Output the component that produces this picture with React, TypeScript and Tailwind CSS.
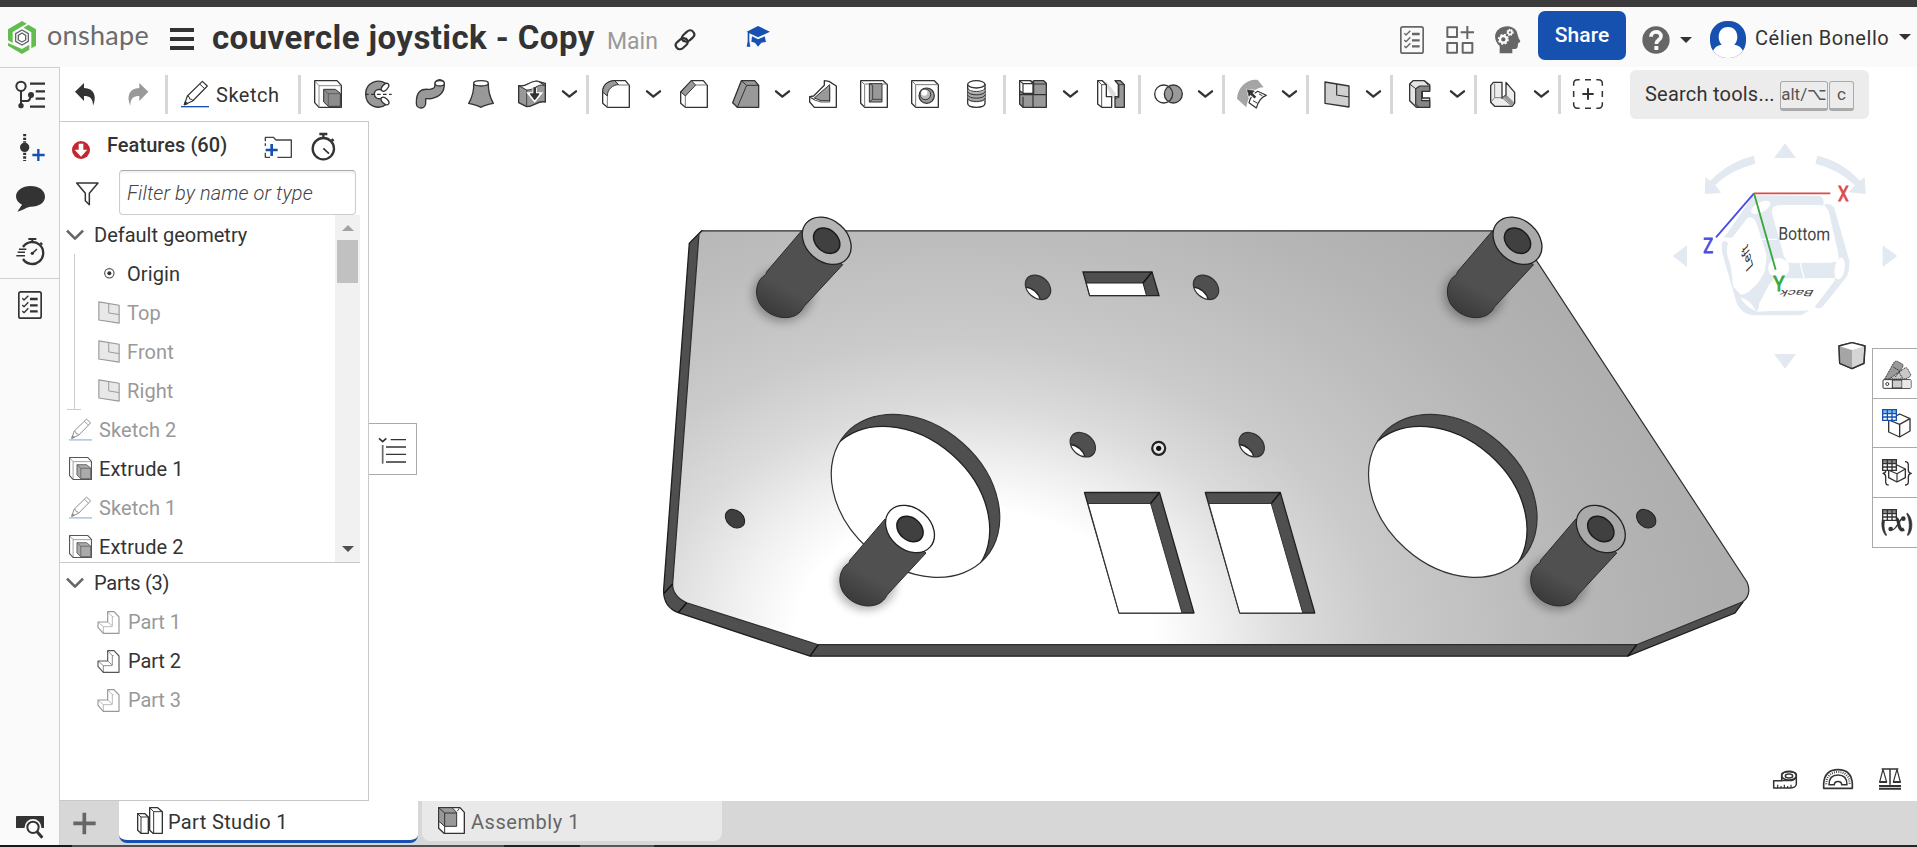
import React from "react";

const INK = "#333";
const MID = "#999";

type IconProps = { w?: number; h?: number; vb?: string; children: React.ReactNode; className?: string };

/* Icons are drawn on a grid of three units per pixel. */
function Icon({ w = 28, h = 28, vb, children, className = "" }: IconProps) {
  return (
    <svg
      width={w}
      height={h}
      viewBox={vb ?? `0 0 ${w * 3} ${h * 3}`}
      fill="none"
      stroke={INK}
      strokeWidth={4}
      strokeLinejoin="round"
      className={"block shrink-0 overflow-visible " + className}
    >
      {children}
    </svg>
  );
}

const ExtrudeIcon = ({ size = 28, soft = false }: { size?: number; soft?: boolean }) => (
  <Icon w={size} h={size} vb="0 0 84 84">
    <g stroke={soft ? "#555" : INK}>
      <path d="M2 2H69L82 16V82H15L2 68Z" fill="#fff" />
      <path d="M15 82V17H82M2 2L15 17" strokeWidth={2.5} stroke="#777" />
      <path d="M29 28H64L79 40V79H43L29 66Z" fill={soft ? "#aaa" : "#8d8d8d"} strokeWidth={3} />
      <path d="M43 79V41H79M29 28L43 41" strokeWidth={2.5} stroke="#555" />
    </g>
  </Icon>
);

const PencilIcon = ({ size = 28, soft = false }: { size?: number; soft?: boolean }) => (
  <Icon w={size} h={size} vb="0 0 84 84">
    <g stroke={soft ? "#888" : INK} strokeWidth={3.5}>
      <path d="M10 74L19 48L64 4L79 18L35 63Z" fill="#fff" />
      <path d="M19 48L24 50L26 57L33 58L35 63M56 12L71 26" strokeWidth={3} />
      <path d="M10 74L13 65L19 71Z" fill={soft ? "#888" : INK} />
    </g>
    <path d="M0 80H84" stroke={soft ? "#8fa9dd" : "#1651b0"} strokeWidth={4} />
  </Icon>
);

const PlaneIcon = ({ soft = false }: { soft?: boolean }) => (
  <Icon w={soft ? 22 : 26} h={soft ? 23 : 27} vb="0 0 78 81">
    <g stroke={soft ? "#999" : INK} strokeWidth={4}>
      <path d="M3 3L75 15V78L3 67Z" fill={soft ? "#e8e8e8" : "#d0d0d0"} />
      <path d="M38 9V42L75 48" strokeWidth={3.5} />
    </g>
  </Icon>
);

const PartIcon = ({ soft = false }: { soft?: boolean }) => (
  <Icon w={23} h={23} vb="0 0 69 69">
    <g stroke={soft ? "#999" : "#555"} strokeWidth={3.5}>
      <path d="M32 2H51L66 18V67H19L3 49V33H32Z" fill="#fff" />
      <path d="M32 2L46 17V45L32 33M3 33L19 47H46M19 47V67M46 17H50" strokeWidth={2} />
    </g>
  </Icon>
);

const Chevron = ({ className = "" }: { className?: string }) => (
  <Icon w={15} h={9} className={className}>
    <path d="M3 4L22 20L42 4" strokeWidth={7} strokeLinecap="round" />
  </Icon>
);

const Separator = ({ className = "" }: { className?: string }) => (
  <div className={"h-[39px] w-[3px] shrink-0 bg-[#d7d7d7] " + className} />
);

const ChecklistIcon = ({ color }: { color: string }) => (
  <Icon w={24} h={28}>
    <g stroke={color}>
      <rect x="2.5" y="2.5" width="67" height="79" rx="6" strokeWidth={5} />
      <path d="M13 22L18 27L31 14M13 42L18 47L31 34M13 60L18 65L31 52" strokeWidth={4} />
      <path d="M36 24H59M36 43H59M36 61H59" strokeWidth={7} />
    </g>
  </Icon>
);

function Header() {
  return (
    <header className="flex h-[60px] shrink-0 items-center bg-[#fafafa]">
      <Icon w={28} h={33} className="ml-[8px]">
        <g stroke="none" fill="#63bd4e">
          <path d="M0 25L42 0L56 8L14 33V66L0 58Z" />
          <path d="M61 11L84 25V74L70 82V34L47 20Z" />
          <path d="M0 66L42 84L64 71V86L42 99L0 74Z" />
        </g>
        <path d="M42 27L61 38V61L42 72L23 61V38Z" fill="#fff" stroke="#63676b" strokeWidth={4} />
        <path d="M42 36L53 43V57L42 63L31 57V43Z" stroke="#63676b" strokeWidth={4} />
      </Icon>
      <span className="ml-[11px] -mt-[4px] w-[102px] whitespace-nowrap font-['Lato',sans-serif] text-[27px] leading-[32px] tracking-[0.3px] text-[#6b6b6b]">
        onshape
      </span>
      <div className="ml-[21px] mt-[3px] flex w-[24px] flex-col gap-[5px]">
        <div className="h-[4px] bg-[#333]" />
        <div className="h-[4px] bg-[#333]" />
        <div className="h-[4px] bg-[#333]" />
      </div>
      <h1 className="ml-[18px] mt-[2px] w-[383px] whitespace-nowrap text-[33px] font-bold leading-[40px] tracking-[0.42px] text-[#333]">
        couvercle joystick - Copy
      </h1>
      <span className="ml-[12px] mt-[9px] w-[53px] text-[23px] leading-[28px] text-[#999]">Main</span>
      <Icon w={22} h={22} className="ml-[14px] mt-[5px]">
        <g strokeWidth={6.5} strokeLinecap="round">
          <path d="M28 36C22 30 23 23 28 18L39 8C45 2 53 3 57 8C62 13 62 20 57 25L47 34C42 39 34 39 30 35" />
          <path d="M36 29C43 35 43 42 37 48L27 57C21 62 13 62 9 57C4 52 4 45 9 40L19 31C24 27 31 27 35 30" />
        </g>
      </Icon>
      <Icon w={24} h={22} className="ml-[50px]">
        <g fill="#1651b0" stroke="none">
          <path d="M36 0L72 17L36 34L10 22V46L13 62H2L5 46V19L2 17Z" />
          <path d="M18 31L36 40L56 31L60 48L46 50L36 62L27 50L16 47Z" />
        </g>
      </Icon>
      <div className="ml-auto flex items-center pt-[5px]">
        <ChecklistIcon color="#666" />
        <Icon w={28} h={28} className="ml-[22px]">
          <g stroke="#666" strokeWidth={6}>
            <rect x="4" y="4" width="29" height="29" />
            <rect x="4" y="51" width="29" height="29" />
            <rect x="50" y="51" width="29" height="29" />
            <path d="M44 19H84M64 0V39" />
          </g>
        </Icon>
        <Icon w={26} h={28} className="ml-[21px]">
          <path
            d="M14 82V60C-4 44-4 20 12 9C28-4 54-2 64 14C68 22 68 30 72 38L76 46C76 50 70 50 69 53C68 62 70 70 52 69V82Z"
            fill="#666"
            stroke="none"
          />
          <circle cx="25" cy="40" r="10" stroke="#fafafa" strokeWidth={7} fill="none" />
          <circle cx="25" cy="40" r="14" stroke="#fafafa" strokeWidth={5} strokeDasharray="6 5" />
          <circle cx="45" cy="19" r="6" stroke="#fafafa" strokeWidth={5} />
          <circle cx="45" cy="19" r="9" stroke="#fafafa" strokeWidth={4} strokeDasharray="4 3.5" />
        </Icon>
        <button className="ml-[17px] -mt-[8px] h-[49px] w-[88px] rounded-[7px] bg-[#1651b0] pt-[1px] text-[21px] font-medium tracking-[0.1px] text-white">
          Share
        </button>
        <Icon w={28} h={28} className="ml-[16px]">
          <circle cx="42" cy="42" r="41" fill="#666" stroke="none" />
          <path d="M27 32C27 13 57 13 57 31C57 42 43 41 43 54" stroke="#fafafa" strokeWidth={11} />
          <path d="M37 60H49V72H37Z" fill="#fafafa" stroke="none" />
        </Icon>
        <div className="ml-[10px] h-0 w-0 border-x-[6px] border-t-[6px] border-x-transparent border-t-[#333]" />
        <div className="ml-[18px] h-[37px] w-[36px] shrink-0 overflow-hidden rounded-[17px] bg-[#1651b0]">
          <svg viewBox="0 0 108 111" className="block h-full w-full" fill="#fff">
            <path d="M54 18C73 18 82 32 82 48C82 58 78 66 73 71C92 74 100 84 106 111H2C8 84 16 74 35 71C30 66 26 58 26 48C26 32 35 18 54 18Z" />
          </svg>
        </div>
        <span className="-mt-[3px] ml-[9px] w-[134px] whitespace-nowrap text-[20px] tracking-[0.55px] text-[#333]">Célien Bonello</span>
        <div className="ml-[10px] mr-[6px] h-0 w-0 -translate-y-[3px] border-x-[6px] border-t-[6px] border-x-transparent border-t-[#333]" />
      </div>
    </header>
  );
}

function Toolbar() {
  return (
    <div className="flex h-[54px] shrink-0 items-center bg-white pl-[15px]">
      <Icon w={21} h={23}>
        <path d="M0 26L27 0V15C58 15 66 42 54 68C54 46 44 39 27 39V54Z" fill={INK} stroke="none" />
      </Icon>
      <Icon w={21} h={23} className="ml-[32px]">
        <path d="M61 26L34 0V15C3 15-5 42 7 68C7 46 17 39 34 39V54Z" fill={MID} stroke="none" />
      </Icon>
      <Separator className="ml-[16px]" />
      <div className="ml-[13px]"><PencilIcon /></div>
      <span className="ml-[7px] mt-px w-[64px] text-[20px] tracking-[0.5px] text-[#333]">Sketch</span>
      <Separator className="ml-[18px]" />
      <div className="ml-[13px]"><ExtrudeIcon /></div>
      <Icon w={28} className="ml-[23px]">
        <path d="M62 10C40-4 2 6 2 42C2 80 42 90 62 74L50 54C38 60 28 52 28 42C28 30 40 26 50 30L68 16Z" fill={MID} />
        <ellipse cx="60" cy="22" rx="14" ry="8" fill="#fff" transform="rotate(-48 60 22)" />
        <ellipse cx="60" cy="63" rx="14" ry="8" fill="#fff" transform="rotate(42 60 63)" />
        <path d="M0 43H80" strokeDasharray="11 7" strokeWidth={3.5} />
      </Icon>
      <Icon w={29} className="ml-[23px]">
        <path d="M15 70C14 32 30 44 44 42C64 38 71 30 71 13" strokeWidth={32} strokeLinecap="round" />
        <path d="M15 70C14 32 30 44 44 42C64 38 71 30 71 13" strokeWidth={24} strokeLinecap="round" stroke={MID} />
        <ellipse cx="71" cy="10" rx="14" ry="8" fill="#fff" />
      </Icon>
      <Icon w={26} className="ml-[23px]">
        <path d="M17 10C19 38 10 56 2 70Q30 76 38 82Q52 74 76 70C66 52 60 32 61 10Z" fill={MID} />
        <ellipse cx="39" cy="10" rx="22" ry="8" fill="#fff" />
      </Icon>
      <Icon w={28} className="ml-[24px]">
        <path d="M2 17C24 24 38 0 60 4L82 10V66C60 60 48 80 26 80L2 68Z" fill={MID} />
        <path d="M2 17C24 24 38 0 60 4L80 16C58 10 48 32 26 30Z" fill="#fff" strokeWidth={3} />
        <path d="M26 30V80" strokeWidth={2.5} />
        <path d="M50 24V44M38 43H62L50 58Z" strokeWidth={13} stroke="#fff" strokeLinejoin="miter" />
        <path d="M50 22V46" strokeWidth={8} />
        <path d="M38 42H62L50 58Z" fill={INK} />
      </Icon>
      <Chevron className="ml-[16px]" />
      <Separator className="ml-[9px]" />
      <Icon w={28} className="ml-[13px]">
        <path d="M2 36C2 14 20 2 38 2H70L82 16V82H16L2 70Z" fill="#fff" />
        <path d="M2 36C2 14 20 2 38 2L50 14C32 14 16 28 16 48Z" fill={MID} strokeWidth={3} />
        <path d="M50 15H82M16 48V82" strokeWidth={3} stroke="#777" />
      </Icon>
      <Chevron className="ml-[16px]" />
      <Icon w={28} className="ml-[19px]">
        <path d="M2 36L34 2H70L82 16V82H16L2 70Z" fill="#fff" />
        <path d="M3 36L34 2L47 15L16 48Z" fill={MID} strokeWidth={3} />
        <path d="M47 15H82M16 48V82" strokeWidth={3} stroke="#777" />
      </Icon>
      <Icon w={27} className="ml-[24px]">
        <path d="M28 2H68L80 16V82H16L2 68Z" fill={MID} />
        <path d="M28 2L44 16L16 82M44 16H80" strokeWidth={3} />
      </Icon>
      <Chevron className="ml-[16px]" />
      <Icon w={28} className="ml-[19px]">
        <path d="M46 2L60 4L82 18V82H16L2 66V50L14 48L46 16Z" fill="#fff" />
        <path d="M62 22V66H36L16 60L4 52L16 58Z" strokeWidth={2.5} />
        <path d="M16 54L62 14V62H36Z" fill={MID} strokeWidth={3} />
      </Icon>
      <Icon w={28} className="ml-[23px]">
        <path d="M2 2H70L82 14V82H14L2 70Z" fill="#fff" />
        <path d="M2 2L14 14V82M14 12H82" strokeWidth={3} stroke="#777" />
        <path d="M28 11H66V66H28Z" fill={MID} strokeWidth={3} />
        <path d="M28 11L38 16V58H66M38 58L28 66" strokeWidth={2.5} />
      </Icon>
      <Icon w={28} className="ml-[23px]">
        <path d="M2 2H70L82 14V82H14L2 70Z" fill="#fff" />
        <path d="M2 2L14 14V82M14 14H82" strokeWidth={3} stroke="#777" />
        <circle cx="47" cy="47" r="23" fill={MID} strokeWidth={3.5} />
        <circle cx="43" cy="43" r="16" fill="#bbb" strokeWidth={3} />
        <circle cx="40" cy="38" r="9" fill="#fff" stroke="none" />
      </Icon>
      <Icon w={19} className="ml-[28px]">
        <path d="M2 12V70C2 86 54 86 54 70V12" fill="#fff" />
        <path d="M2 26C2 40 54 40 54 26V56C54 70 2 70 2 56Z" fill="#aaa" stroke="none" />
        <path d="M2 24C2 38 54 38 54 24M2 34C2 48 54 48 54 34M2 44C2 58 54 58 54 44M2 54C2 68 54 68 54 54" strokeWidth={3} />
        <ellipse cx="28" cy="13" rx="26" ry="11" fill="#fff" />
      </Icon>
      <Separator className="ml-[17px]" />
      <Icon w={28} className="ml-[13px]">
        <path d="M2 2H34L40 6L44 2H74L82 10V82H12L2 72Z" fill={MID} />
        <path d="M2 2H34L42 10V40H12L2 32Z" fill="#fff" />
        <path d="M12 40V11H42M2 2L12 11M12 82V50M44 12H82M42 42V82M2 44H82M44 6V42" strokeWidth={3.5} />
      </Icon>
      <Chevron className="ml-[16px]" />
      <Icon w={28} className="ml-[19px]">
        <path d="M26 2L56 40V54H44V50L28 20Z" fill="#ddd" stroke="none" />
        <path d="M2 2H16L28 14V50H44V82H14L2 72Z" fill="#fff" />
        <path d="M2 2L14 14V82M14 14H28" strokeWidth={2.5} />
        <path d="M54 2H70L82 14V82H54V50H64V14Z" fill={MID} />
        <path d="M54 2L66 14H82M66 14V52L54 56" strokeWidth={2.5} />
      </Icon>
      <Separator className="ml-[13px]" />
      <Icon w={29} className="ml-[13px]">
        <circle cx="58" cy="42" r="27" fill={MID} />
        <circle cx="29" cy="42" r="27" />
      </Icon>
      <Chevron className="ml-[15px]" />
      <Separator className="ml-[9px]" />
      <Icon w={30} className="ml-[12px]">
        <path d="M0 56C2 22 30-4 62 0L80 22C56 22 34 42 28 82Z" fill="#a5a5a5" stroke="none" />
        <path d="M62 34L88 46C74 50 64 64 58 84L36 68C40 52 48 42 62 34Z" fill="#fff" strokeWidth={3.5} />
        <path d="M66 42L76 47M48 62L62 70" strokeWidth={3} />
        <path d="M28 26L58 30L52 38L60 50L50 58L40 48L34 54Z" fill="#fff" stroke="none" />
        <path d="M55 53L42 40" strokeWidth={8} />
        <path d="M31 29L52 33L36 49Z" fill={INK} strokeWidth={2} />
      </Icon>
      <Chevron className="ml-[15px]" />
      <Separator className="ml-[9px]" />
      <div className="ml-[15px]"><PlaneIcon /></div>
      <Chevron className="ml-[16px]" />
      <Separator className="ml-[9px]" />
      <Icon w={22} className="ml-[16px]">
        <path d="M2 12L12 2H46L62 14V32H40V54H62V82H22L2 62Z" fill="#e5e5e5" />
        <path d="M20 26L32 18H62V34H38V62H62V82H30L20 74Z" fill="#858585" strokeWidth={3.5} />
        <path d="M2 12L20 26M46 2L58 16" strokeWidth={3} />
      </Icon>
      <Chevron className="ml-[19px]" />
      <Separator className="ml-[9px]" />
      <Icon w={26} h={27} className="ml-[13px]">
        <path d="M2 14L10 4H36V52L48 42V4L74 34V66L66 76H14L2 64Z" fill="#eee" />
        <path d="M38 48L52 44L72 64L66 74Z" fill={MID} stroke="none" />
        <path d="M2 64L14 50H36M14 50V8M36 50L64 74M48 40V48" strokeWidth={2.5} stroke="#666" />
      </Icon>
      <Chevron className="ml-[18px]" />
      <Separator className="ml-[9px]" />
      <Icon w={30} h={30} className="ml-[12px]">
        <path
          d="M2 20V14Q2 2 14 2H20M36 2H54M70 2H76Q88 2 88 14V20M88 36V54M88 70V76Q88 88 76 88H70M54 88H36M20 88H14Q2 88 2 76V70M2 54V36"
          strokeWidth={4.5}
        />
        <path d="M45 28V62M28 45H62" strokeWidth={6} />
      </Icon>
      <div className="ml-[27px] flex h-[49px] w-[239px] shrink-0 items-center rounded-[6px] bg-[#ececec] pl-[15px] text-[#333]">
        <span className="w-[135px] whitespace-nowrap text-[20px] tracking-[0.22px]">Search tools...</span>
        <kbd className="mt-[4px] flex h-[30px] w-[48px] items-center justify-center rounded-[3px] border border-b-[3px] border-[#aaa] font-['Roboto','DejaVu_Sans',sans-serif] text-[17px] text-[#555]">
          alt/⌥
        </kbd>
        <kbd className="ml-[1px] mt-[4px] flex h-[30px] w-[25px] items-center justify-center rounded-[3px] border border-b-[3px] border-[#aaa] font-['Roboto',sans-serif] text-[17px] text-[#555]">
          c
        </kbd>
      </div>
    </div>
  );
}

function SideRail() {
  return (
    <aside className="flex w-[60px] shrink-0 flex-col items-center border-r border-t border-[#cfcfcf] bg-[#fafafa]">
      <Icon w={30} h={28} className="ml-[1px] mt-[13px]">
        <circle cx="18" cy="16" r="14" strokeWidth={6} />
        <path d="M18 30V74M18 60H36Q46 60 47 44" strokeWidth={6} />
        <circle cx="18" cy="74" r="8" fill={INK} stroke="none" />
        <circle cx="48" cy="42" r="9" fill={INK} stroke="none" />
        <path d="M45 8H90M62 31H90M62 53H90M45 77H90" strokeWidth={7} />
      </Icon>
      <Icon w={25} h={27} className="ml-[5px] mt-[25px]">
        <circle cx="14" cy="40" r="14" fill={INK} stroke="none" />
        <path d="M14 0V26M14 56V81" strokeWidth={9} strokeDasharray="7 4" />
        <path d="M55 45V81M37 63H74" strokeWidth={7} stroke="#1651b0" />
      </Icon>
      <Icon w={29} h={26} className="ml-[2px] mt-[25px]">
        <path d="M43 0C70 0 87 14 87 32C87 50 68 63 42 62C28 66 20 72 4 77L18 56C6 50 0 42 0 31C0 13 20 0 43 0Z" fill={INK} stroke="none" />
      </Icon>
      <Icon w={27} h={27} className="ml-[1px] mt-[26px]">
        <path d="M18 28A33 33 0 1 1 18 64" strokeWidth={7} transform="translate(0 -1)" />
        <path d="M34 3H58M46 3V14M70 14L76 20" strokeWidth={6} />
        <path d="M46 46L60 33M6 34H28M2 43H24M-2 53H24" strokeWidth={4.5} />
        <circle cx="46" cy="46" r="5" fill={INK} stroke="none" />
      </Icon>
      <div className="mt-[13px] h-px w-full shrink-0 bg-[#cfcfcf]" />
      <div className="ml-[1px] mt-[12px]"><ChecklistIcon color={INK} /></div>
      <Icon w={28} h={22} className="mb-[7px] mt-auto">
        <path d="M2 0H82Q84 0 84 3V36H0V3Q0 0 2 0Z" fill={INK} stroke="none" />
        <circle cx="51" cy="34" r="25" fill="#fafafa" stroke="none" />
        <circle cx="51" cy="34" r="17" fill="#fafafa" strokeWidth={6} stroke={INK} />
        <path d="M62 46L79 65" strokeWidth={9} />
      </Icon>
    </aside>
  );
}

type RowProps = { kind: "plane" | "sketch" | "extrude" | "origin"; label: string };

function Row({ kind, label }: RowProps) {
  const nested = kind === "plane" || kind === "origin";
  const soft = kind === "plane" || kind === "sketch";
  return (
    <div className={"flex h-[39px] shrink-0 items-center pt-[1px] " + (nested ? "pl-[38px]" : "pl-[9px]")}>
      <div className={"-mt-[2px] flex shrink-0 justify-center " + (nested ? "w-[22px]" : "w-[23px]")}>
        {kind === "plane" && <PlaneIcon soft />}
        {kind === "sketch" && <PencilIcon size={23} soft />}
        {kind === "extrude" && <ExtrudeIcon size={23} soft />}
        {kind === "origin" && (
          <Icon w={11} h={11}>
            <circle cx="16" cy="16" r="14" strokeWidth={3.5} stroke="#555" />
            <circle cx="16" cy="16" r="6" fill={INK} stroke="none" />
          </Icon>
        )}
      </div>
      <span className={"ml-[7px] text-[20px] tracking-[0.1px] " + (soft ? "text-[#999]" : "text-[#333]")}>{label}</span>
    </div>
  );
}

const SectionChevron = () => (
  <Icon w={18} h={12}>
    <path d="M3 5L27 29L51 5" strokeWidth={8} stroke="#666" />
  </Icon>
);

function FeaturePanel() {
  return (
    <section className="flex w-[309px] shrink-0 flex-col border-b border-r border-t border-[#c8c8c8] bg-white">
      <div className="flex h-[48px] shrink-0 items-center pl-[12px]">
        <Icon w={18} h={18} className="mt-[7px]">
          <circle cx="27" cy="27" r="27" fill="#c3272f" stroke="none" />
          <path d="M20 8H34V26H46L27 47L8 26H20Z" fill="#fff" stroke="none" />
        </Icon>
        <span className="-mt-[2px] ml-[17px] w-[124px] whitespace-nowrap text-[20px] font-medium tracking-[0.05px] text-[#333]">Features (60)</span>
        <Icon w={28} h={22} className="ml-[33px] mt-[2px]">
          <path d="M4 16V4H28L36 12H82V64H40M4 50V64H18M4 22V30" strokeWidth={4} stroke="#444" />
          <path d="M23 24V60M5 42H41" strokeWidth={8} stroke="#1651b0" />
        </Icon>
        <Icon w={26} h={28} className="ml-[19px] mt-[2px]">
          <circle cx="37" cy="47" r="32" strokeWidth={7} />
          <path d="M25 3H49M37 3V14M62 18L68 24" strokeWidth={7} />
          <path d="M37 46L54 62" strokeWidth={5} />
        </Icon>
      </div>
      <div className="flex h-[45px] shrink-0 items-center pl-[16px]">
        <Icon w={23} h={24} className="mt-[3px]">
          <path d="M2 3H66L40 34V68L28 56V34Z" strokeWidth={4.5} />
        </Icon>
        <div className="ml-[20px] flex h-[45px] w-[237px] items-center rounded-[4px] border border-[#ccc] border-t-[#aaa] pl-[7px] pt-[1px] shadow-[inset_0_2px_2px_rgba(0,0,0,0.06)]">
          <span className="whitespace-nowrap text-[20px] font-light italic tracking-[0.1px] text-[#444]">Filter by name or type</span>
        </div>
      </div>
      <div className="flex h-[348px] w-[300px] shrink-0 border-b border-[#c8c8c8]">
        <div className="relative flex w-[275px] flex-col overflow-hidden">
          <div className="flex h-[39px] shrink-0 items-center pl-[6px]">
            <SectionChevron />
            <span className="ml-[10px] text-[20px] tracking-[0px] text-[#333]">Default geometry</span>
          </div>
          <Row kind="origin" label="Origin" />
          <Row kind="plane" label="Top" />
          <Row kind="plane" label="Front" />
          <Row kind="plane" label="Right" />
          <Row kind="sketch" label="Sketch 2" />
          <Row kind="extrude" label="Extrude 1" />
          <Row kind="sketch" label="Sketch 1" />
          <Row kind="extrude" label="Extrude 2" />
          <div className="absolute left-[14px] top-[39px] h-[155px] w-px bg-[#ccc]" />
          <div className="absolute left-[7px] top-[194px] h-px w-[14px] bg-[#ccc]" />
        </div>
        <div className="flex w-[25px] flex-col items-center bg-[#f1f1f1]">
          <div className="mt-[10px] h-0 w-0 border-x-[6px] border-b-[6px] border-x-transparent border-b-[#a3a3a3]" />
          <div className="mt-[9px] h-[43px] w-[21px] bg-[#c1c1c1]" />
          <div className="mb-[10px] mt-auto h-0 w-0 border-x-[6px] border-t-[6px] border-x-transparent border-t-[#505050]" />
        </div>
      </div>
      <div className="flex h-[40px] shrink-0 items-center pl-[6px]">
        <SectionChevron />
        <span className="ml-[10px] text-[20px] tracking-[-0.25px] text-[#333]">Parts (3)</span>
      </div>
      {["Part 1", "Part 2", "Part 3"].map((p) => (
        <div key={p} className="flex h-[39px] shrink-0 items-center pb-px pl-[37px]">
          <PartIcon soft={p !== "Part 2"} />
          <span className={"ml-[8px] text-[20px] tracking-[-0.1px] " + (p === "Part 2" ? "text-[#333]" : "text-[#999]")}>{p}</span>
        </div>
      ))}
    </section>
  );
}

const HOLE = { rx: 93.7, ry: 71 };

function Hole({ id, cx, cy, s, dx = -10, dy = 12 }: { id: string; cx: number; cy: number; s: number; dx?: number; dy?: number }) {
  const rot = `rotate(41.4 ${cx} ${cy})`;
  return (
    <g>
      <clipPath id={id}>
        <ellipse cx={cx} cy={cy} rx={HOLE.rx * s} ry={HOLE.ry * s} transform={rot} />
      </clipPath>
      <ellipse cx={cx} cy={cy} rx={HOLE.rx * s} ry={HOLE.ry * s} transform={rot} fill="#4f4f4f" />
      <g clipPath={`url(#${id})`}>
        <g transform={`translate(${dx} ${dy})`}>
          <ellipse cx={cx} cy={cy} rx={HOLE.rx * s} ry={HOLE.ry * s} transform={rot} fill="#fff" stroke="#222" strokeWidth="1.3" />
        </g>
      </g>
      <ellipse cx={cx} cy={cy} rx={HOLE.rx * s} ry={HOLE.ry * s} transform={rot} fill="none" stroke="#333" strokeWidth="1.2" />
    </g>
  );
}

function Post({ x, y, cap }: { x: number; y: number; cap: string }) {
  return (
    <g transform={`translate(${x} ${y})`}>
      <ellipse cx="-44" cy="54" rx="30" ry="27" fill="#000" opacity="0.3" filter="url(#soft)" />
      <path
        d="M-25 -10L-60 31L-61 34C-70 39-73 52-67 63C-58 77-40 80-30 74C-24 70-24 67-22 65L16 24Z"
        fill="url(#post)"
        stroke="#2a2a2a"
        strokeWidth="1"
      />
      <ellipse rx="27" ry="20.7" transform="rotate(41.4)" fill={cap} stroke="#222" strokeWidth="1.3" />
      <ellipse rx="14.6" ry="11" transform="rotate(41.4)" fill="#404040" stroke="#1c1c1c" strokeWidth="1.5" />
    </g>
  );
}

function Slot({ x }: { x: number }) {
  return (
    <g transform={`translate(${x} 0)`} strokeLinejoin="round">
      <path d="M1084.5 492.5H1159.5L1194 613H1119Z" fill="#4f4f4f" stroke="#222" strokeWidth="1.3" />
      <path d="M1088 503.5H1150.5L1182 613H1119Z" fill="#fff" stroke="#333" strokeWidth="1" />
      <path d="M1159.5 492.5L1150.5 503.5" stroke="#111" strokeWidth="1.3" />
    </g>
  );
}

function Model() {
  return (
    <g>
      <path
        d="M701.7 230.7L689.3 243.3L663.6 590C663.4 601 669 609 678.3 612.7L810 656.2H1627.7L1735 613L1743 602L1700 560Z"
        fill="#4f4f4f"
        stroke="#1e1e1e"
        strokeWidth="1.3"
      />
      <path
        d="M702 230.8H1517L1747 582C1751 591 1748 599 1741.7 602.3L1636.7 644.7H818.3L686.7 602.7C678 599 672 592 672.7 583.3L699 234Z"
        fill="url(#face)"
        stroke="#2d2d2d"
        strokeWidth="1.2"
      />
      <path d="M672.7 584L664 593.3M686.7 602.7L678.3 612.7M818.3 644.7L810 656.2M1636.7 644.7L1627.7 656.2" stroke="#111" strokeWidth="1.4" />
      <Hole id="h1" cx={915.5} cy={495.9} s={0.997} />
      <Hole id="h2" cx={1452.8} cy={495.9} s={0.997} />
      <Hole id="h3" cx={1038} cy={287.3} s={0.15} />
      <Hole id="h4" cx={1206} cy={287.3} s={0.15} />
      <Hole id="h5" cx={1082.8} cy={444.7} s={0.15} />
      <Hole id="h6" cx={1251.7} cy={444.7} s={0.15} />
      <ellipse cx="735" cy="518.7" rx="10.6" ry="8.2" transform="rotate(41.4 735 518.7)" fill="#3f3f3f" stroke="#222" />
      <ellipse cx="1646.2" cy="518.7" rx="10.6" ry="8.2" transform="rotate(41.4 1646.2 518.7)" fill="#3f3f3f" stroke="#222" />
      <g>
        <path d="M1083 272H1152L1159 295.6H1089.7Z" fill="#4f4f4f" stroke="#222" strokeWidth="1.3" />
        <path d="M1086.3 283H1143L1146.5 295.6H1089.7Z" fill="#fff" stroke="#222" strokeWidth="1" />
        <path d="M1152 272L1143 283" stroke="#111" strokeWidth="1.3" />
      </g>
      <Slot x={0} />
      <Slot x={120.8} />
      <circle cx="1158.7" cy="448.3" r="6.5" fill="#e8e8e8" stroke="#222" strokeWidth="2.2" />
      <circle cx="1158.7" cy="448.3" r="2.6" fill="#111" />
      <Post x={826.7} y={240.7} cap="#b5b5b5" />
      <Post x={1517.5} y={240.7} cap="#a9a9a9" />
      <Post x={910} y={529} cap="#fff" />
      <Post x={1600.8} y={529} cap="#a9a9a9" />
    </g>
  );
}

function ViewCube() {
  return (
    <g transform="translate(1640 130) scale(0.33333)" fontFamily="Roboto, sans-serif">
      <g fill="#e2e9f0">
        <path d="M435 40L468 84H402ZM435 716L402 672H468ZM98 378L141 346V411ZM772 378L728 346V411Z" />
        <path d="M342 77L346 101Q276 118 226 164L243 189L194 192L196 142L211 152Q268 94 342 77Z" />
        <path d="M532 77L526 101Q596 118 645 166L626 187L677 192L674 142L659 152Q606 94 532 77Z" />
        <path d="M340 196L540 198Q552 204 551 222L541 236L400 230L385 330L250 322L262 310Z" />
        <path d="M552 224Q568 216 582 232L628 392Q630 420 620 440L548 530Q536 540 524 530L584 452L596 380L566 244Z" />
        <path d="M246 340Q252 324 264 340L280 470L350 545L508 538Q496 556 470 556H336Q306 552 290 520L246 366Z" />
        <path d="M350 240L400 240L440 398L592 396L584 444L400 446L350 545L300 496Q350 480 376 420Z" />
      </g>
      <g fill="#fff">
        <path d="M420 225H536Q556 226 564 244L594 366Q596 396 570 398H466Q444 398 432 380L396 250Q394 226 420 225Z" />
        <path d="M322 264Q340 256 350 280L378 370Q382 400 372 420L330 482Q306 500 296 486L262 376Q258 346 268 334Z" />
        <path d="M404 446H566Q584 448 578 460L520 534Q510 542 490 542H372Q352 540 358 520L388 462Z" />
        <ellipse cx="416" cy="414" rx="32" ry="30" />
        <ellipse cx="362" cy="232" rx="32" ry="15" transform="rotate(-28 362 232)" />
        <ellipse cx="599" cy="416" rx="15" ry="33" transform="rotate(10 599 416)" />
        <path d="M300 502Q334 510 348 544Q318 532 300 502Z" />
      </g>
      <path d="M480 398L492 444M362 328H412" stroke="#fff" strokeWidth="4" />
      <text x="415" y="329" fontSize="54" fill="#444" textLength="155" lengthAdjust="spacingAndGlyphs" transform="rotate(1 415 329)">Bottom</text>
      <text transform="matrix(-1 0 0.35 -0.65 524 480)" fontSize="40" fill="#444" textLength="100" lengthAdjust="spacingAndGlyphs">Back</text>
      <text transform="matrix(-0.2 -0.78 0.62 -0.62 340 408)" fontSize="46" fill="#333" textLength="88" lengthAdjust="spacingAndGlyphs">Left</text>
      <g strokeWidth="5.5" fill="none">
        <path d="M342 190H571" stroke="#dc4a4d" />
        <path d="M342 190L228 322" stroke="#4b4be2" />
        <path d="M342 190L407 419" stroke="#38a83d" />
      </g>
      <g fontSize="60" strokeWidth="2.5">
        <text x="594" y="212" fill="#dc4a4d" stroke="#dc4a4d" textLength="32" lengthAdjust="spacingAndGlyphs">X</text>
        <text x="190" y="368" fill="#4b4be2" stroke="#4b4be2" textLength="30" lengthAdjust="spacingAndGlyphs">Z</text>
        <text x="400" y="482" fill="#38a83d" stroke="#38a83d" textLength="34" lengthAdjust="spacingAndGlyphs">Y</text>
      </g>
    </g>
  );
}

const TableGlyph = ({ color, cell }: { color: string; cell: string }) => (
  <g stroke="none">
    <rect x="0" y="0" width="45" height="36" fill={color} />
    <path d="M4 4H14V12H4ZM18 4H28V12H18ZM32 4H41V12H32Z" fill={cell} />
    <path d="M4 16H14V22H4ZM18 16H28V22H18ZM32 16H41V22H32ZM4 26H14V32H4ZM18 26H28V32H18ZM32 26H41V32H32Z" fill="#fff" />
  </g>
);

function RightTabs() {
  const cell = "flex h-[50px] items-center border-b border-[#aaa] pl-[9px]";
  return (
    <div className="absolute right-0 top-[227px] w-[45px] border-l border-t border-[#aaa] bg-white">
      <div className={cell}>
        <Icon w={30} h={28} className="mt-[3px]">
          <g strokeWidth={3}>
            <path d="M8 54L36 4Q42-2 48 2L62 10Q64 14 62 18L40 54Z" fill="#999" strokeDasharray="4 2" />
            <path d="M22 54L70 20Q76 20 78 26L86 40Q86 46 82 48L70 54Z" fill="#c8c8c8" strokeDasharray="4 2" />
            <path d="M34 18L54 30L40 48M50 32L62 52" strokeDasharray="4 2" />
            <rect x="3" y="56" width="84" height="26" rx="3" fill="#fff" />
            <path d="M31 57H60V81H31Z" fill="#ccc" />
            <path d="M61 57H86V81H61Z" fill="#e8e8e8" stroke="none" />
            <circle cx="16" cy="69" r="4.5" />
          </g>
        </Icon>
      </div>
      <div className="flex h-[49px] items-center border-b border-[#aaa] pl-[9px]">
        <Icon w={29} h={29}>
          <path d="M53 15L84 29V66L53 84L20 69V33Z" fill="#fff" />
          <path d="M20 33L53 46L84 29M53 46V84" />
          <TableGlyph color="#1651b0" cell="#7cb8f2" />
        </Icon>
      </div>
      <div className={cell}>
        <Icon w={30} h={27}>
          <path d="M45 18L70 30V56L45 69L20 56V34Z" fill="#fff" />
          <path d="M20 34L45 44L70 30M45 44V69" strokeWidth={3.5} />
          <path d="M20 78Q11 78 11 68V54Q11 44 3 43Q11 42 11 36M69 8Q79 8 79 18V34Q79 43 88 43Q79 44 79 54V68Q79 78 69 78" />
          <TableGlyph color="#333" cell="#888" />
        </Icon>
      </div>
      <div className={cell}>
        <Icon w={30} h={27}>
          <path d="M12 80C-4 64-4 30 8 20L12 24C4 40 4 60 14 78ZM76 12C94 30 94 64 78 80L76 78C84 60 84 34 74 14Z" fill={INK} stroke={INK} strokeWidth={2} />
          <path d="M38 30Q48 26 50 44Q54 68 66 60" strokeWidth={10} />
          <path d="M66 28Q58 26 52 40L42 54Q34 66 26 60" strokeWidth={4} />
          <circle cx="64" cy="29" r="7" fill={INK} stroke="none" />
          <circle cx="26" cy="60" r="7" fill={INK} stroke="none" />
          <TableGlyph color="#333" cell="#888" />
        </Icon>
      </div>
    </div>
  );
}

function Viewport() {
  return (
    <main className="relative min-w-0 flex-1 overflow-hidden bg-white">
      <svg width="1548" height="680" viewBox="369 121 1548 680" className="block">
        <defs>
          <radialGradient id="face" gradientUnits="userSpaceOnUse" cx="0" cy="0" r="1" gradientTransform="translate(975 640) rotate(4) scale(780 570)">
            <stop offset="0.23" stopColor="#ffffff" />
            <stop offset="0.31" stopColor="#f0f0f0" />
            <stop offset="0.41" stopColor="#dbdbdb" />
            <stop offset="0.53" stopColor="#cacaca" />
            <stop offset="0.7" stopColor="#bdbdbd" />
            <stop offset="0.85" stopColor="#b3b3b3" />
            <stop offset="1" stopColor="#adadad" />
          </radialGradient>
          <linearGradient id="post" x1="0.75" y1="0.2" x2="0.3" y2="1">
            <stop offset="0.65" stopColor="#505050" />
            <stop offset="1" stopColor="#3c3c3c" />
          </linearGradient>
          <filter id="soft" x="-50%" y="-50%" width="200%" height="200%">
            <feGaussianBlur stdDeviation="5" />
          </filter>
        </defs>
        <Model />
        <ViewCube />
      </svg>
      <div className="absolute -left-px top-[302px] flex h-[52px] w-[49px] items-center border-y border-r border-[#aaa] bg-white pl-[10px]">
        <Icon w={28} h={28} className="mt-[3px]">
          <path d="M3 4L14 14L25 4" strokeWidth={5} />
          <path d="M14 24V80" strokeWidth={5} stroke="#666" />
          <path d="M38 8H84M24 30H84M24 52H84M24 75H84" strokeWidth={4} />
        </Icon>
      </div>
      <Icon w={28} h={28} className="absolute left-[1469px] top-[221px]">
        <path d="M42 2L81 12L78 64L42 80L5 64L3 12Z" fill="#d5d5d5" />
        <path d="M3 12L42 24V80L5 64Z" fill="#a5a5a5" stroke="none" />
        <path d="M42 2L81 12L42 24L3 12Z" fill="#fff" stroke="none" />
        <path d="M42 2L81 12L78 64L42 80L5 64L3 12Z" />
      </Icon>
      <RightTabs />
      <div className="absolute bottom-[11px] right-[16px] flex items-center">
        <Icon w={24} h={19}>
          <path d="M2 32H26V14C26 2 70 2 70 14V42C70 50 60 54 50 54H2Z" fill="#fff" strokeWidth={4.5} />
          <ellipse cx="48" cy="17" rx="22" ry="13" strokeWidth={4.5} />
          <ellipse cx="48" cy="18" rx="11" ry="6" strokeWidth={4.5} />
          <path d="M26 20V32H50Q64 32 70 22M14 54V44M24 54V48M34 54V44M44 54V48M54 54V44" strokeWidth={3.5} />
        </Icon>
        <Icon w={30} h={20} className="ml-[26px]">
          <path d="M2 58V44C4 16 20 2 45 2C70 2 86 16 88 44V58Z" strokeWidth={5} />
          <path d="M18 47C18 26 28 18 45 18C62 18 72 26 72 47H56C56 34 34 34 34 47Z" strokeWidth={4.5} />
          <path d="M10 46C10 20 26 9 45 9C64 9 80 20 80 46" strokeWidth={6} strokeDasharray="2.5 4" />
        </Icon>
        <Icon w={22} h={22} className="ml-[26px]">
          <path d="M8 3H58M33 3V50" strokeWidth={4.5} />
          <path d="M12 4L2 42H23ZM54 4L43 42H64Z" strokeWidth={3.5} />
          <path d="M1 42H24M42 42H65" strokeWidth={6} />
          <path d="M0 54H66M0 62H66" strokeWidth={6} />
        </Icon>
      </div>
    </main>
  );
}

function TabBar() {
  return (
    <footer className="flex h-[44px] shrink-0 items-start bg-[#d7d7d7]">
      <Icon w={23} h={23} className="ml-[13px] mt-[11px]">
        <path d="M34 2V67M1 34H68" strokeWidth={11} stroke="#666" />
      </Icon>
      <div className="ml-[23px] flex h-[42px] w-[299px] items-center rounded-b-[8px] border-b-[3px] border-[#1651b0] bg-white pl-[18px]">
        <Icon w={26} h={27}>
          <path d="M2 20H24L34 30V79H12L2 70Z" fill="#fff" />
          <path d="M2 20L12 30H34M12 30V79" strokeWidth={3} />
          <path d="M38 2H62L76 14V79H48L38 70Z" fill="#fff" />
          <path d="M38 2L50 14H76M50 14V79" strokeWidth={3} />
        </Icon>
        <span className="ml-[5px] mt-[2px] whitespace-nowrap text-[20px] tracking-[0.35px] text-[#333]">Part Studio 1</span>
      </div>
      <div className="ml-[4px] flex h-[40px] w-[300px] items-center rounded-b-[8px] bg-[#e9e9e9] pl-[16px]">
        <Icon w={27} h={27} className="-mt-[2px]">
          <path d="M2 2H66L79 16V79H18L2 64Z" fill="#fff" />
          <path d="M2 2H42L56 16V58H20L2 42Z" fill={MID} strokeWidth={3} />
          <path d="M2 2L20 18H56M20 18V79M64 4L58 12" strokeWidth={3} />
        </Icon>
        <span className="ml-[6px] mt-px whitespace-nowrap text-[20px] tracking-[0.55px] text-[#666]">Assembly 1</span>
      </div>
    </footer>
  );
}

export default function App() {
  return (
    <div className="flex h-[847px] w-[1917px] flex-col overflow-hidden bg-white font-['Roboto',sans-serif]">
      <div className="h-[7px] shrink-0 bg-[#3c3c3c]" />
      <Header />
      <div className="flex h-[778px] shrink-0">
        <SideRail />
        <div className="flex w-[1857px] flex-col">
          <Toolbar />
          <div className="flex h-[680px] shrink-0">
            <FeaturePanel />
            <Viewport />
          </div>
          <TabBar />
        </div>
      </div>
      <div className="flex h-[2px] shrink-0 bg-[#262626]">
        <div className="w-[72px] bg-[#1b1717]" />
        <div className="w-[432px] bg-[#505050]" />
        <div className="w-[76px] bg-[#222226]" />
        <div className="w-[74px] bg-[#55595c]" />
      </div>
    </div>
  );
}
